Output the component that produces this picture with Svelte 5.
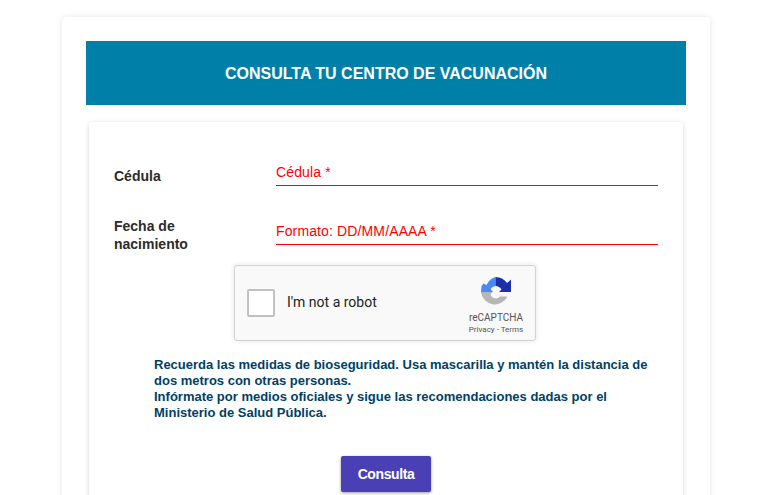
<script>
	let cedula = $state('');
	let fecha = $state('');
	let checked = $state(false);
</script>

<main class="page">
	<section class="card">
		<header class="banner">
			<h1>CONSULTA TU CENTRO DE VACUNACIÓN</h1>
		</header>

		<form class="form" onsubmit={(e) => e.preventDefault()}>
			<div class="row">
				<label for="cedula">Cédula</label>
				<input id="cedula" placeholder="Cédula *" bind:value={cedula} />
			</div>
			<div class="row">
				<label for="fecha">Fecha de nacimiento</label>
				<input id="fecha" placeholder="Formato: DD/MM/AAAA *" bind:value={fecha} />
			</div>

			<div class="captcha">
				<button type="button" class="check" class:checked aria-label="I'm not a robot" onclick={() => (checked = !checked)}></button>
				<span class="robot">I'm not a robot</span>
				<div class="brand">
					<svg width="32" height="32" viewBox="0 0 32 32" aria-hidden="true">
						<path fill="#b6b6b6" d="M1 15H12.500L10.500 17A5.500 5.500 0 0 0 19 20.500L20 19.500H27.500A14 14 0 0 1 1 15Z" />
						<path fill="#4a8af4" d="M15.500 0V9A7 7 0 0 0 10.500 12L13 15H1V14.500L1.500 9L3.500 6.500L6.500 8A15 15 0 0 1 15.500 0Z" />
						<path fill="#1c2fa8" d="M15.500 0A15 15 0 0 1 27 6L31 2.500V15H19L21.500 12.500A7 7 0 0 0 15.500 9Z" />
					</svg>
					<span class="name">reCAPTCHA</span>
					<span class="links">Privacy - Terms</span>
				</div>
			</div>

			<p class="note">
				Recuerda las medidas de bioseguridad. Usa mascarilla y mantén la distancia de dos metros con otras personas.<br />
				Infórmate por medios oficiales y sigue las recomendaciones dadas por el Ministerio de Salud Pública.
			</p>

			<button class="submit" type="submit">Consulta</button>
		</form>
	</section>
</main>

<style>
	:global(body) {
		background: #fff;
		overflow: hidden;
		font-family: "Liberation Sans", Arial, sans-serif;
	}
	.page {
		padding: 17px 60px 0 62px;
	}
	.card {
		background: #fff;
		border-radius: 4px;
		box-shadow: 0 0 6px rgba(0, 0, 0, 0.1);
		padding: 24px 24px 40px;
	}
	.banner {
		background: #0080a8;
		height: 64px;
		display: flex;
		align-items: center;
		justify-content: center;
		padding-top: 1px;
		box-sizing: border-box;
	}
	h1 {
		margin: 0;
		color: #fff;
		font-size: 16px;
		font-weight: 700;
	}
	.form {
		margin: 17px 3px 0;
		padding: 36px 25px 30px;
		border-radius: 4px;
		box-shadow: 0 1px 5px rgba(0, 0, 0, 0.16);
		display: flex;
		flex-direction: column;
	}
	.row {
		display: grid;
		grid-template-columns: 162px 1fr;
		align-items: center;
		height: 36px;
	}
	.row + .row {
		margin-top: 23px;
	}
	label {
		width: 110px;
		color: #2b2b2b;
		font-size: 14px;
		font-weight: 700;
		line-height: 18px;
	}
	input {
		display: block;
		box-sizing: border-box;
		width: 100%;
		height: 28px;
		margin-bottom: 8px;
		padding: 6px 0;
		border: 0;
		border-bottom: 1px solid #f00;
		outline: 0;
		background: transparent;
		font: 14px/16px "Liberation Sans", Arial, sans-serif;
		letter-spacing: 0.13px;
		color: #222;
	}
	input::placeholder {
		color: #f00;
		opacity: 1;
	}
	.captcha {
		box-sizing: border-box;
		align-self: flex-start;
		margin: 12px 0 0 120px;
		width: 302px;
		height: 76px;
		display: flex;
		align-items: center;
		padding: 0 12px;
		background: #f9f9f9;
		border: 1px solid #d3d3d3;
		border-radius: 3px;
		box-shadow: 0 0 4px 1px rgba(0, 0, 0, 0.08);
	}
	.check {
		box-sizing: border-box;
		width: 28px;
		height: 28px;
		padding: 0;
		background: #fff;
		border: 2px solid #c1c1c1;
		border-radius: 2px;
		cursor: pointer;
	}
	.check.checked {
		background: #4a8af4;
	}
	.robot {
		margin-left: 12px;
		margin-bottom: 2px;
		color: #222;
		font: 14px Roboto, sans-serif;
	}
	.brand {
		margin-left: auto;
		margin-right: -3px;
		margin-top: 5px;
		width: 60px;
		display: flex;
		flex-direction: column;
		align-items: center;
		color: #555;
		font-family: Roboto, sans-serif;
	}
	.brand svg {
		display: block;
	}
	.name {
		margin-top: 2px;
		font-size: 10px;
		line-height: 13px;
	}
	.links {
		font-size: 8px;
		line-height: 11px;
		white-space: nowrap;
	}
	.note {
		margin: 16px 0 0 40px;
		width: 500px;
		color: #003f66;
		font-size: 13px;
		font-weight: 700;
		line-height: 16px;
	}
	.submit {
		align-self: center;
		margin-top: 35px;
		width: 90px;
		height: 36px;
		border: 0;
		border-radius: 2px;
		background: #4a3fb5;
		color: #fff;
		font: 700 14px "Liberation Sans", Arial, sans-serif;
		letter-spacing: -0.4px;
		box-shadow: 0 1px 3px rgba(0, 0, 0, 0.4);
		cursor: pointer;
	}
</style>
